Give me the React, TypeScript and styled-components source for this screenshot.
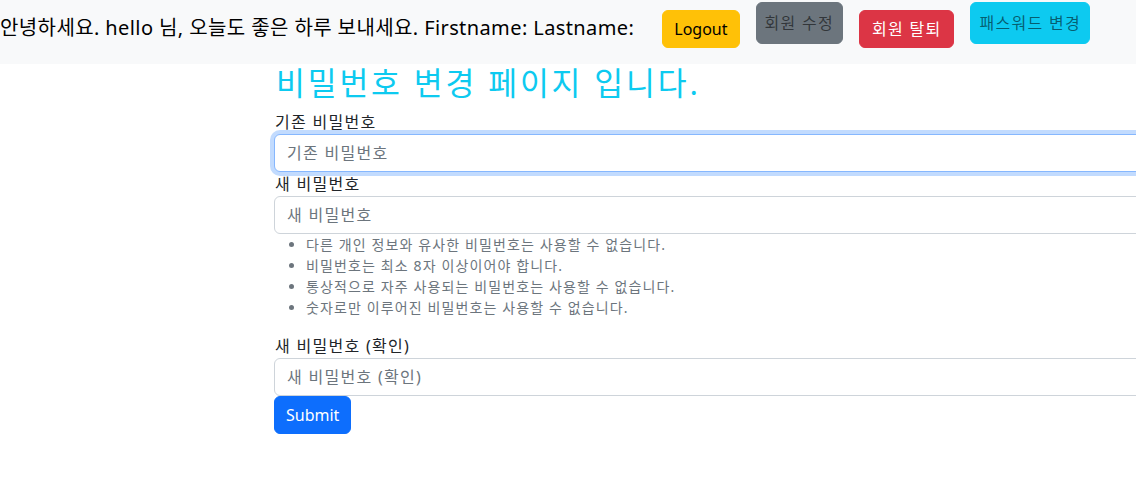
import styled, { createGlobalStyle, css } from "styled-components";

const GlobalStyle = createGlobalStyle`
  html, body {
    margin: 0;
    padding: 0;
    background: #ffffff;
    overflow-x: hidden;
  }
  body {
    font-family: "Noto Sans", "Noto Sans CJK KR", sans-serif;
    font-size: 16px;
    line-height: 1.5;
    color: #212529;
  }
  *, *::before, *::after {
    box-sizing: border-box;
  }
`;

type Variant = "warning" | "secondary" | "danger" | "info" | "primary";

const variants: Record<Variant, { bg: string; color: string }> = {
  warning: { bg: "#ffc107", color: "#000000" },
  secondary: { bg: "#6c757d", color: "rgba(0, 0, 0, 0.55)" },
  danger: { bg: "#dc3545", color: "#ffffff" },
  info: { bg: "#0dcaf0", color: "rgba(0, 0, 0, 0.55)" },
  primary: { bg: "#0d6efd", color: "#ffffff" },
};

// link-style items sit higher in the bar and use nav-link padding
const navButtons: { label: string; variant: Variant; link: boolean; korean: boolean }[] = [
  { label: "Logout", variant: "warning", link: false, korean: false },
  { label: "회원 수정", variant: "secondary", link: true, korean: true },
  { label: "회원 탈퇴", variant: "danger", link: false, korean: true },
  { label: "패스워드 변경", variant: "info", link: true, korean: true },
];

const rules = [
  "다른 개인 정보와 유사한 비밀번호는 사용할 수 없습니다.",
  "비밀번호는 최소 8자 이상이어야 합니다.",
  "통상적으로 자주 사용되는 비밀번호는 사용할 수 없습니다.",
  "숫자로만 이루어진 비밀번호는 사용할 수 없습니다.",
];

export default function App() {
  return (
    <>
      <GlobalStyle />
      <Navbar>
        <Brand>
          안녕하세요. hello 님, 오늘도 좋은 하루 보내세요. Firstname: Lastname:
        </Brand>
        <NavActions>
          {navButtons.map((b) => (
            <Button
              key={b.label}
              $variant={b.variant}
              $link={b.link}
              $korean={b.korean}
            >
              {b.label}
            </Button>
          ))}
        </NavActions>
      </Navbar>

      <Main>
        <Title>비밀번호 변경 페이지 입니다.</Title>
        <Form onSubmit={(e) => e.preventDefault()}>
          <Label htmlFor="old">기존 비밀번호</Label>
          <Input id="old" type="password" placeholder="기존 비밀번호" $focused />

          <Label htmlFor="new1">새 비밀번호</Label>
          <Input id="new1" type="password" placeholder="새 비밀번호" />
          <HelpList>
            {rules.map((r) => (
              <li key={r}>{r}</li>
            ))}
          </HelpList>

          <Label htmlFor="new2">새 비밀번호 (확인)</Label>
          <Input id="new2" type="password" placeholder="새 비밀번호 (확인)" />

          <SubmitButton type="submit" $variant="primary">
            Submit
          </SubmitButton>
        </Form>
      </Main>
    </>
  );
}

const Navbar = styled.nav`
  display: flex;
  align-items: flex-start;
  height: 64px;
  padding-top: 2px;
  background-color: #f8f9fa;
`;

const Brand = styled.span`
  padding-top: 11px;
  margin-right: 28px;
  font-size: 20px;
  line-height: 30px;
  letter-spacing: 0.02em;
  white-space: nowrap;
  color: #000000;
`;

const NavActions = styled.div`
  display: flex;
  align-items: flex-start;
  gap: 16px;
`;

const buttonBase = css<{ $variant: Variant }>`
  display: inline-block;
  border: 1px solid ${({ $variant }) => variants[$variant].bg};
  border-radius: 6px;
  background-color: ${({ $variant }) => variants[$variant].bg};
  color: ${({ $variant }) => variants[$variant].color};
  font-family: "Noto Sans", "Noto Sans CJK KR", sans-serif;
  font-size: 16px;
  line-height: 24px;
  white-space: nowrap;
  cursor: pointer;
`;

const Button = styled.button<{ $variant: Variant; $link: boolean; $korean: boolean }>`
  ${buttonBase}
  padding: ${({ $link, $korean }) =>
    $link ? "8px 8px" : $korean ? "6px 12px" : "6px 11px"};
  margin-top: ${({ $link }) => ($link ? "0" : "8px")};
  letter-spacing: ${({ $korean }) => ($korean ? "0.08em" : "0")};
`;

const Main = styled.main`
  padding-left: 274px;
`;

const Title = styled.h2`
  margin: 0 0 8px 2px;
  font-size: 31.4px;
  font-weight: 400;
  line-height: 1.2;
  letter-spacing: 0.09em;
  color: #0dcaf0;
`;

const Form = styled.form`
  display: flex;
  flex-direction: column;
  align-items: flex-start;
  width: 920px;
`;

const Label = styled.label`
  padding-left: 1px;
  font-size: 16px;
  line-height: 24px;
  letter-spacing: 0.08em;
  color: #212529;
`;

const Input = styled.input<{ $focused?: boolean }>`
  width: 100%;
  height: 38px;
  padding: 6px 12px;
  border: 1px solid #ced4da;
  border-radius: 6px;
  font-family: "Noto Sans", "Noto Sans CJK KR", sans-serif;
  font-size: 16px;
  letter-spacing: 0.08em;
  color: #212529;
  background: #ffffff;
  outline: none;

  &::placeholder {
    color: #6c757d;
  }

  ${({ $focused }) =>
    $focused &&
    css`
      border-color: #86b7fe;
      box-shadow: 0 0 0 4px rgba(13, 110, 253, 0.25);
    `}
`;

const HelpList = styled.ul`
  margin: 0 0 16px;
  padding-left: 32px;
  font-size: 14px;
  line-height: 21px;
  letter-spacing: 0.08em;
  color: #6c757d;
`;

const SubmitButton = styled.button<{ $variant: Variant }>`
  ${buttonBase}
  padding: 6px 11px;
`;
